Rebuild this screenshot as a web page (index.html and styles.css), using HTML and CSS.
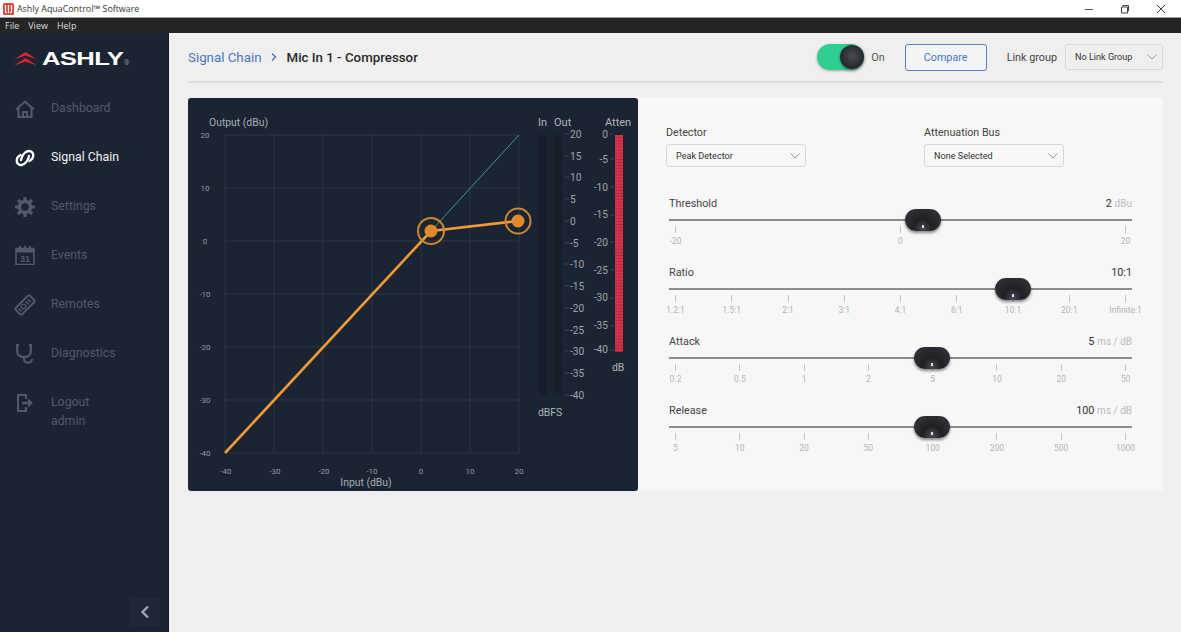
FILE: index.html
```html
<!doctype html>
<html>
<head>
<meta charset="UTF-8">
<title>Ashly AquaControl Software</title>
<link rel="stylesheet" href="styles.css">
</head>
<body>
<div class="titlebar">
  <svg class="app-icon" width="11" height="12" viewBox="0 0 11 12"><rect width="11" height="12" rx="1.5" fill="#d9483b"/><path d="M2.5 2v6.5q0 1.5 1.5 1.5M5.5 2v8M8.500 2v6.500q0 1.500-1.500 1.500" fill="none" stroke="#fff" stroke-width="1.200"/></svg>
  <span class="app-title">Ashly AquaControl™ Software</span>
  <div class="winbtns">
    <svg width="10" height="10" viewBox="0 0 10 10"><path d="M1 5.500h8" stroke="#555"/></svg>
    <svg width="10" height="10" viewBox="0 0 10 10"><path d="M1.500 3h6v6h-6zM3 3V1.500h5.500V7H7.500" fill="none" stroke="#444"/></svg>
    <svg width="10" height="10" viewBox="0 0 10 10"><path d="M1 1l8 8M9 1l-8 8" stroke="#444"/></svg>
  </div>
</div>
<div class="menubar"><span>File</span><span>View</span><span>Help</span></div>

<div class="app">
  <aside class="sidebar">
    <div class="logo">
      <svg width="23" height="14" viewBox="0 0 23 14"><path d="M0 7.500 11.500 0 23 7.500 11.500 3.500zM0 13.500l11.500-7.500L23 13.500 11.500 9.500z" fill="#e0262f"/></svg>
      <span class="logo-word">ASHLY</span><span class="logo-reg">®</span>
    </div>
    <nav class="nav">
      <div class="nav-item">
        <svg width="20" height="18" viewBox="0 0 20 18"><path d="M1 9.500 10 1.500l9 8M3.500 8v9h13V8M8 17v-5h4v5" fill="none" stroke="#525a67" stroke-width="2"/></svg>
        <span>Dashboard</span>
      </div>
      <div class="nav-item active">
        <svg width="20" height="18" viewBox="0 0 20 18"><g fill="none" stroke="#fff" stroke-width="2.400" stroke-linecap="round"><path d="M6 11C7 6.500 10 2.500 13.500 2 16.500 1.700 18.500 4 18.200 7 18 9.500 16.500 11 14.500 12"/><path d="M14 7C13 11.500 10 15.500 6.500 16 3.500 16.300 1.500 14 1.800 11 2 8.500 3.500 7 5.500 6"/></g></svg>
        <span>Signal Chain</span>
      </div>
      <div class="nav-item">
        <svg width="20" height="20" viewBox="0 0 20 20"><circle cx="10" cy="10" r="5.500" fill="none" stroke="#525a67" stroke-width="3.500"/><path d="M10 0v20M0 10h20M3 3l14 14M17 3 3 17" stroke="#525a67" stroke-width="3.200" stroke-dasharray="3.500 13 3.500 0"/></svg>
        <span>Settings</span>
      </div>
      <div class="nav-item">
        <svg width="20" height="19" viewBox="0 0 20 19"><path d="M1 2.500h18v16H1z" fill="none" stroke="#525a67" stroke-width="1.600"/><path d="M1 2.500h18v4H1zM4 0h2v3H4zM9 0h2v3H9zM14 0h2v3h-2z" fill="#525a67"/><text class="cal-num" x="10" y="16">31</text></svg>
        <span>Events</span>
      </div>
      <div class="nav-item">
        <svg width="22" height="22" viewBox="0 0 22 22"><g transform="rotate(-45 11 11)"><rect x="1" y="6.500" width="20" height="9" rx="2" fill="none" stroke="#525a67" stroke-width="2"/><circle cx="9" cy="11" r="2.200" fill="none" stroke="#525a67" stroke-width="1.300"/><path d="M4 9v4M14 9v4M17 9v4" stroke="#525a67" stroke-width="1.500"/></g></svg>
        <span>Remotes</span>
      </div>
      <div class="nav-item">
        <svg width="20" height="20" viewBox="0 0 20 20"><path d="M4 1.200H2.200V7C2.200 11 5 13 9 13S15.800 11 15.800 7V1.200H14M9 13v2C9 17 11 18.700 13 18.700S17 17 17 15" fill="none" stroke="#525a67" stroke-width="2.200"/></svg>
        <span>Diagnostics</span>
      </div>
      <div class="nav-item logout">
        <svg width="20" height="20" viewBox="0 0 20 20"><path d="M11 6V2H3v16h8v-4" fill="none" stroke="#525a67" stroke-width="2"/><path d="M7 8.800h6V5.500l5 4.500-5 4.500v-3.300H7z" fill="#525a67"/></svg>
        <span>Logout<br>admin</span>
      </div>
    </nav>
    <div class="collapse">
      <svg width="10" height="14" viewBox="0 0 10 14"><path d="M8 1.500 2.500 7 8 12.500" fill="none" stroke="#9ea5b1" stroke-width="2.400"/></svg>
    </div>
  </aside>

  <main class="main">
    <header class="head">
      <div class="crumbs">
        <a class="crumb-link">Signal Chain</a>
        <svg width="6" height="8" viewBox="0 0 6 8"><path d="M1 .500 4.500 4 1 7.500" fill="none" stroke="#4a6fb5" stroke-width="1.300"/></svg>
        <span class="crumb-here">Mic In 1 - Compressor</span>
      </div>
      <div class="head-tools">
        <div class="toggle"><div class="toggle-knob"></div></div>
        <span class="on-label">On</span>
        <button class="btn-compare">Compare</button>
        <span class="link-label">Link group</span>
        <div class="select select-link">No Link Group <svg width="10" height="6" viewBox="0 0 10 6"><path d="M.5.500 5 5 9.500.500" fill="none" stroke="#999"/></svg></div>
      </div>
    </header>

    <section class="panels">
      <div class="graph">
        <svg width="450" height="393" viewBox="188 98 450 393">
          <defs>
            <pattern id="leds" width="8" height="3.100" patternUnits="userSpaceOnUse" y="135">
              <rect width="8" height="2.300" fill="#dc2f48"/>
              <rect y="2.300" width="8" height=".8" fill="#a32c40"/>
            </pattern>
          </defs>
          <g class="grid">
            <path d="M225 135v318M274 135v318M323 135v318M372 135v318M421 135v318M470 135v318M519 135v318"/>
            <path d="M225 135h294M225 188h294M225 241h294M225 294h294M225 347h294M225 400h294M225 453h294"/>
          </g>
          <text class="ax-title" x="209" y="126">Output (dBu)</text>
          <g class="ax-num mid">
            <text x="205" y="138">20</text><text x="205" y="191">10</text><text x="205" y="244">0</text>
            <text x="205" y="297">-10</text><text x="205" y="350">-20</text><text x="205" y="403">-30</text><text x="205" y="456">-40</text>
            <text x="226" y="474">-40</text><text x="275" y="474">-30</text><text x="324" y="474">-20</text><text x="372" y="474">-10</text>
            <text x="421" y="474">0</text><text x="470" y="474">10</text><text x="519" y="474">20</text>
          </g>
          <text class="ax-title mid" x="366" y="486">Input (dBu)</text>

          <path d="M431 231 519 135" stroke="#3f9c8e" stroke-width="1" fill="none"/>
          <path d="M225 453 431 231 518 221" stroke="#f09a35" stroke-width="2.600" fill="none"/>
          <circle cx="431" cy="231" r="13" class="node-ring"/>
          <circle cx="431" cy="231" r="6.500" class="node-dot"/>
          <circle cx="518" cy="221" r="12.500" class="node-ring"/>
          <circle cx="518" cy="221" r="6.500" class="node-dot"/>

          <text class="meter-title" x="538" y="126">In</text>
          <text class="meter-title" x="554" y="126">Out</text>
          <text class="meter-title" x="605" y="126">Atten</text>
          <rect x="538" y="135" width="9" height="260" fill="#171e2a"/>
          <rect x="553" y="135" width="9" height="260" fill="#171e2a"/>
          <g class="meter-num">
            <text x="570" y="138">20</text><text x="570" y="160">15</text><text x="570" y="181">10</text><text x="570" y="203">5</text>
            <text x="570" y="225">0</text><text x="570" y="247">-5</text><text x="570" y="268">-10</text><text x="570" y="290">-15</text>
            <text x="570" y="312">-20</text><text x="570" y="334">-25</text><text x="570" y="355">-30</text><text x="570" y="377">-35</text><text x="570" y="399">-40</text>
          </g>
          <path class="ticks" d="M565 134h4M565 156h4M565 177h4M565 199h4M565 221h4M565 243h4M565 264h4M565 286h4M565 308h4M565 330h4M565 351h4M565 373h4M565 395h4"/>
          <rect x="615" y="135" width="8" height="217" fill="url(#leds)"/>
          <g class="meter-num end">
            <text x="608" y="138">0</text><text x="608" y="163">-5</text><text x="608" y="191">-10</text><text x="608" y="218">-15</text>
            <text x="608" y="246">-20</text><text x="608" y="274">-25</text><text x="608" y="301">-30</text><text x="608" y="329">-35</text><text x="608" y="353">-40</text>
          </g>
          <path class="ticks" d="M610 134h4M610 159h4M610 187h4M610 215h4M610 242h4M610 270h4M610 298h4M610 326h4M610 350h4"/>
          <text class="meter-title small" x="612" y="371">dB</text>
          <text class="meter-title small" x="538" y="416">dBFS</text>
        </svg>
      </div>

      <div class="controls">
        <div class="select-row">
          <div class="field">
            <label>Detector</label>
            <div class="select">Peak Detector <svg width="10" height="6" viewBox="0 0 10 6"><path d="M.5.500 5 5 9.500.500" fill="none" stroke="#999"/></svg></div>
          </div>
          <div class="field">
            <label>Attenuation Bus</label>
            <div class="select">None Selected <svg width="10" height="6" viewBox="0 0 10 6"><path d="M.5.500 5 5 9.500.500" fill="none" stroke="#999"/></svg></div>
          </div>
        </div>

        <div class="slider">
          <div class="slider-head"><span>Threshold</span><span class="value"><b>2</b> <i>dBu</i></span></div>
          <div class="track"><div class="thumb" style="left:236px"></div></div>
          <div class="scale">
            <div class="tick"><u></u>-20</div><div class="tick"><u></u>0</div><div class="tick"><u></u>20</div>
          </div>
        </div>
        <div class="slider">
          <div class="slider-head"><span>Ratio</span><span class="value"><b>10:1</b></span></div>
          <div class="track"><div class="thumb" style="left:326px"></div></div>
          <div class="scale">
            <div class="tick"><u></u>1.2:1</div><div class="tick"><u></u>1.5:1</div><div class="tick"><u></u>2:1</div><div class="tick"><u></u>3:1</div><div class="tick"><u></u>4:1</div><div class="tick"><u></u>6:1</div><div class="tick"><u></u>10:1</div><div class="tick"><u></u>20:1</div><div class="tick"><u></u>Infinite:1</div>
          </div>
        </div>
        <div class="slider">
          <div class="slider-head"><span>Attack</span><span class="value"><b>5</b> <i>ms / dB</i></span></div>
          <div class="track"><div class="thumb" style="left:245px"></div></div>
          <div class="scale">
            <div class="tick"><u></u>0.2</div><div class="tick"><u></u>0.5</div><div class="tick"><u></u>1</div><div class="tick"><u></u>2</div><div class="tick"><u></u>5</div><div class="tick"><u></u>10</div><div class="tick"><u></u>20</div><div class="tick"><u></u>50</div>
          </div>
        </div>
        <div class="slider">
          <div class="slider-head"><span>Release</span><span class="value"><b>100</b> <i>ms / dB</i></span></div>
          <div class="track"><div class="thumb" style="left:245px"></div></div>
          <div class="scale">
            <div class="tick"><u></u>5</div><div class="tick"><u></u>10</div><div class="tick"><u></u>20</div><div class="tick"><u></u>50</div><div class="tick"><u></u>100</div><div class="tick"><u></u>200</div><div class="tick"><u></u>500</div><div class="tick"><u></u>1000</div>
          </div>
        </div>
      </div>
    </section>
  </main>
</div>
</body>
</html>
```

FILE: styles.css
```css
html, body{margin:0; padding:0; height:632px; overflow:hidden;}
body{font-family:Roboto, "Liberation Sans", sans-serif; background-color:#efefef; color:#333;}

.titlebar{height:17px; background-color:#fff; display:flex; align-items:center; padding-left:3px; border-bottom:1px solid #999;}
.app-icon{margin-right:3px;}
.app-title{font-family:"Open Sans", sans-serif; font-size:8.900px; color:#333;}
.winbtns{margin-left:auto; display:flex; gap:26px; padding-right:15px;}

.menubar{height:15px; background-color:#242526; color:#ddd; font-family:"Open Sans", sans-serif; font-size:9px; display:flex; align-items:center; gap:9px; padding-left:5px;}

.app{display:flex; height:599px;}

.sidebar{width:169px; flex:none; background-color:#1b2433; position:relative; border-right:1px solid #141a25; box-sizing:border-box;}
.logo{height:51px; display:flex; align-items:center; padding-left:14px; box-sizing:border-box;}
.logo-word{font-family:"Liberation Sans", sans-serif; font-weight:700; font-size:19px; color:#fff; margin-left:5px; transform:scaleX(1.350); transform-origin:left center; width:82px; letter-spacing:-.5px;}
.logo-reg{font-size:7px; color:#8a8f99; margin-top:8px;}
.nav-item{height:49px; display:flex; align-items:center; gap:0; color:#525a67; font-size:12.300px; line-height:19px; box-sizing:border-box;}
.nav-item svg{width:22px; margin-left:14px; margin-right:15px; flex:none;}
.nav-item.active{color:#f2f3f4;}
.nav-item.logout{align-items:flex-start; padding-top:15px;}
.cal-num{font-family:"Liberation Sans", sans-serif; font-size:9px; font-weight:700; fill:#525a67; text-anchor:middle;}
.collapse{position:absolute; right:8px; bottom:6px; width:30px; height:28px; background-color:#1f2837; display:flex; align-items:center; justify-content:center;}

.main{flex:1; padding:0 18px 0 19px; min-width:0;}

.head{height:48px; display:flex; align-items:center; border-bottom:2px solid #dcdcdc;}
.crumbs{display:flex; align-items:center; gap:9px; font-size:13.300px;}
.crumb-link{color:#4a74c0;}
.crumb-here{color:#2a2a2a; font-weight:500; margin-left:1px;}
.head-tools{margin-left:auto; display:flex; align-items:center; font-size:10.800px;}
.toggle{width:47px; height:26px; border-radius:13px; background-color:#2fd08f; position:relative; box-shadow:0 1px 3px rgba(0,0,0,.3);}
.toggle-knob{position:absolute; right:0; top:1px; width:24px; height:24px; border-radius:50%; background:radial-gradient(circle at 50% 45%, #4a4c55, #24262d 70%); box-shadow:0 1px 3px rgba(0,0,0,.5);}
.on-label{margin-left:7px; color:#555;}
.btn-compare{margin-left:20px; width:82px; height:27px; background-color:#f3f4f6; border:1px solid #5a7fc0; border-radius:3px; color:#4a74c0; font-family:Roboto, sans-serif; font-size:10.800px; padding:0;}
.link-label{margin-left:20px; color:#444;}

.select{width:140px; height:23px; box-sizing:border-box; border:1px solid #d8d8d8; border-radius:3px; background-color:#f7f7f7; display:flex; align-items:center; justify-content:space-between; padding:0 5px 0 9px; font-size:9.100px; color:#333;}
.select-link{width:98px; height:26px; margin-left:8px; background-color:#efefef;}

.panels{display:flex; margin-top:15px; height:393px;}
.graph{width:450px; background-color:#1b2433; border-radius:3px; flex:none; line-height:0;}
.grid path{stroke:#2b3442; stroke-width:1; fill:none;}
.ax-title{font-size:10.400px; fill:#a8adb5;}
.ax-num{font-size:8px; fill:#949aa4;}
.mid{text-anchor:middle;}
.end{text-anchor:end;}
.node-ring{fill:none; stroke:#cf8630; stroke-width:2;}
.node-dot{fill:#dc8a2c;}
.meter-title{font-size:11px; fill:#b0b4bb;}
.meter-title.small{font-size:10.400px;}
.meter-num{font-size:10.200px; fill:#9ea3ac;}
.ticks{stroke:#3b4452; stroke-width:1; fill:none;}

.controls{flex:1; background-color:#f7f7f7; padding:28px 31px 0 31px;}
.select-row{display:flex; gap:118px; margin-left:-3px;}
.field label{display:block; font-size:10.700px; color:#444; line-height:13px; margin-bottom:5px;}
.slider{position:relative; height:69px;}
.select-row + .slider{margin-top:29px;}
.slider-head{display:flex; justify-content:space-between; font-size:10.800px; line-height:16px; color:#444; height:16px;}
.value b{font-weight:400; color:#333;}
.value i{font-style:normal; color:#bbb; font-size:10px;}
.track{height:2px; background-color:#8c8c8c; margin-top:7px; position:relative;}
.thumb{position:absolute; top:-10px; width:36px; height:22px; border-radius:11px; background:radial-gradient(ellipse at 50% 90%, #4a4c52 0, #1f2026 35%, #2d2f35 75%, #17181c 100%); box-shadow:0 2px 3px rgba(0,0,0,.45);}
.thumb:after{content:""; position:absolute; left:17px; bottom:3px; width:2px; height:3px; background-color:#ddd;}
.scale{display:flex; justify-content:space-between; padding:5px 6px 0 6px;}
.tick{width:1px; display:flex; flex-direction:column; align-items:center; font-size:8.500px; color:#b4b4b4; white-space:nowrap; line-height:11px;}
.tick u{display:block; flex:none; width:1px; height:7px; background-color:#c4c4c4; margin-bottom:3px;}
```
